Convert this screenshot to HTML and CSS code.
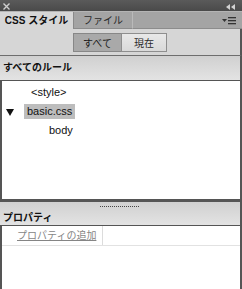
FILE: index.html
```html
<!DOCTYPE html>
<html lang="ja">
<head>
    <meta charset="UTF-8">
    <title>CSS スタイル</title>
    <link rel="stylesheet" href="styles.css">
</head>
<body>

    <div class="panel">
        <div class="titlebar">
            <svg class="close-icon" width="9" height="9" viewBox="0 0 9 9">
                <path d="M1.5 1.5 L7.5 7.5 M7.5 1.5 L1.5 7.5" stroke="#cfcfcf" stroke-width="1.4" fill="none"/>
            </svg>
            <svg class="collapse-icon" width="10" height="6" viewBox="0 0 10 6">
                <polygon points="0,3 4,0 4,6" fill="#d2d2d2"/>
                <polygon points="5,3 9,0 9,6" fill="#d2d2d2"/>
            </svg>
        </div>

        <div class="tabs">
            <div class="tab active">CSS スタイル</div>
            <div class="tab">ファイル</div>
            <div class="tab-fill">
                <svg class="menu-icon" width="15" height="8" viewBox="0 0 15 8">
                    <polygon points="0,2 5,2 2.5,5" fill="#333"/>
                    <rect x="6" y="0" width="8" height="1.3" fill="#333"/>
                    <rect x="6" y="3" width="8" height="1.3" fill="#333"/>
                    <rect x="6" y="6" width="8" height="1.3" fill="#333"/>
                </svg>
            </div>
        </div>

        <div class="toolbar">
            <div class="seg">
                <button class="seg-btn on">すべて</button>
                <button class="seg-btn">現在</button>
            </div>
        </div>

        <div class="section-head">すべてのルール</div>

        <ul class="rules">
            <li class="rule"><span class="name">&lt;style&gt;</span></li>
            <li class="rule sheet">
                <span class="arrow"></span>
                <span class="name selected">basic.css</span>
            </li>
            <li class="rule child"><span class="name">body</span></li>
        </ul>

        <div class="splitter"></div>

        <div class="section-head props-head">
            <div class="grip"></div>
            プロパティ
        </div>

        <div class="props">
            <div class="prop-row">
                <a href="#" class="add-prop">プロパティの追加</a>
                <span class="prop-value"></span>
            </div>
        </div>
    </div>

</body>
</html>
```

FILE: styles.css
```css
body {
    margin: 0;
    padding: 0;
    font-family: "Liberation Sans", "Noto Sans CJK JP", sans-serif;
    color: #1c1c1c;
    background-color: #535353;
    overflow: hidden;
}

.panel {
    display: flex;
    flex-direction: column;
    height: 289px;
}

.titlebar {
    height: 11px;
    background: linear-gradient(#5a5a5a, #4a4a4a);
    display: flex;
    align-items: center;
    justify-content: space-between;
    padding: 0 6px 0 2px;
}

.close-icon {
    margin-top: 1px;
}

.collapse-icon {
    margin-top: 2px;
}

.tabs {
    height: 18px;
    display: flex;
    background-color: #a4a4a4;
    border-top: 1px solid #b4b4b4;
    box-sizing: border-box;
}

.tab {
    font-size: 10px;
    line-height: 17px;
    padding: 0 9px;
    white-space: nowrap;
    border-bottom: 1px solid #8c8c8c;
    border-left: 1px solid #8a8a8a;
    border-right: 1px solid #bababa;
    color: #2a2a2a;
}

.tab.active {
    background-color: #d6d6d6;
    border: none;
    padding: 0;
    width: 73px;
    text-align: center;
    color: #111;
    font-weight: bold;
    font-size: 10px;
}

.tab-fill {
    flex: 1;
    border-bottom: 1px solid #8c8c8c;
    display: flex;
    align-items: center;
    justify-content: flex-end;
    padding-right: 5px;
}

.menu-icon {
    margin-top: 2px;
}

.toolbar {
    height: 27px;
    background-color: #d6d6d6;
    border-bottom: 1px solid #6e6e6e;
    border-right: 2px solid #555;
    display: flex;
    justify-content: center;
    padding-top: 4px;
    box-sizing: border-box;
}

.seg {
    display: flex;
    height: 19px;
}

.seg-btn {
    font-family: "Liberation Sans", "Noto Sans CJK JP", sans-serif;
    font-size: 10px;
    padding: 0;
    margin: 0;
    height: 19px;
    border: 1px solid #8e8e8e;
    background: linear-gradient(#e8e8e8, #d9d9d9);
    color: #2a2a2a;
    width: 46px;
}

.seg-btn.on {
    background: #a9a9a9;
    border-color: #878787;
    width: 48px;
    border-right: none;
    color: #1a1a1a;
}

.section-head {
    font-size: 10px;
    font-weight: bold;
    line-height: 12px;
    padding: 6px 3px 6px 3px;
    background: linear-gradient(#d0d0d0, #e3e3e3);
    border-bottom: 1px solid #555;
    border-right: 2px solid #555;
    color: #111;
}

.rules {
    list-style: none;
    margin: 0;
    padding: 2px 0 0 0;
    height: 118px;
    box-sizing: border-box;
    background-color: white;
    border-left: 2px solid #555;
    border-right: 2px solid #555;
}

.rule {
    height: 19px;
    display: flex;
    align-items: center;
    font-size: 11px;
    padding-left: 26px;
    color: #111;
}

.rule .name {
    line-height: 15px;
    padding: 0 3px;
}

.rule.sheet {
    padding-left: 4px;
}

.arrow {
    width: 0;
    height: 0;
    border-left: 4px solid transparent;
    border-right: 4px solid transparent;
    border-top: 7px solid #111;
    margin-right: 10px;
    margin-top: 1px;
}

.selected {
    background-color: #bdbdbd;
}

.rule.child {
    padding-left: 44px;
}

.splitter {
    height: 3px;
    background-color: #555;
}

.props-head {
    padding: 4px 3px 1px 3px;
}

.grip {
    height: 1px;
    width: 40px;
    margin: 0 auto 5px auto;
    background-image: linear-gradient(to right, #444 50%, transparent 50%);
    background-size: 2px 1px;
}

.props {
    flex: 1;
    background-color: white;
    border-left: 2px solid #555;
    border-right: 2px solid #555;
}

.prop-row {
    display: flex;
    height: 19px;
    border-bottom: 1px solid #e2e2e2;
}

.add-prop {
    width: 85px;
    padding-left: 15px;
    font-size: 10px;
    line-height: 19px;
    color: #858585;
    border-right: 1px solid #dcdcdc;
}

.prop-value {
    flex: 1;
}
```
